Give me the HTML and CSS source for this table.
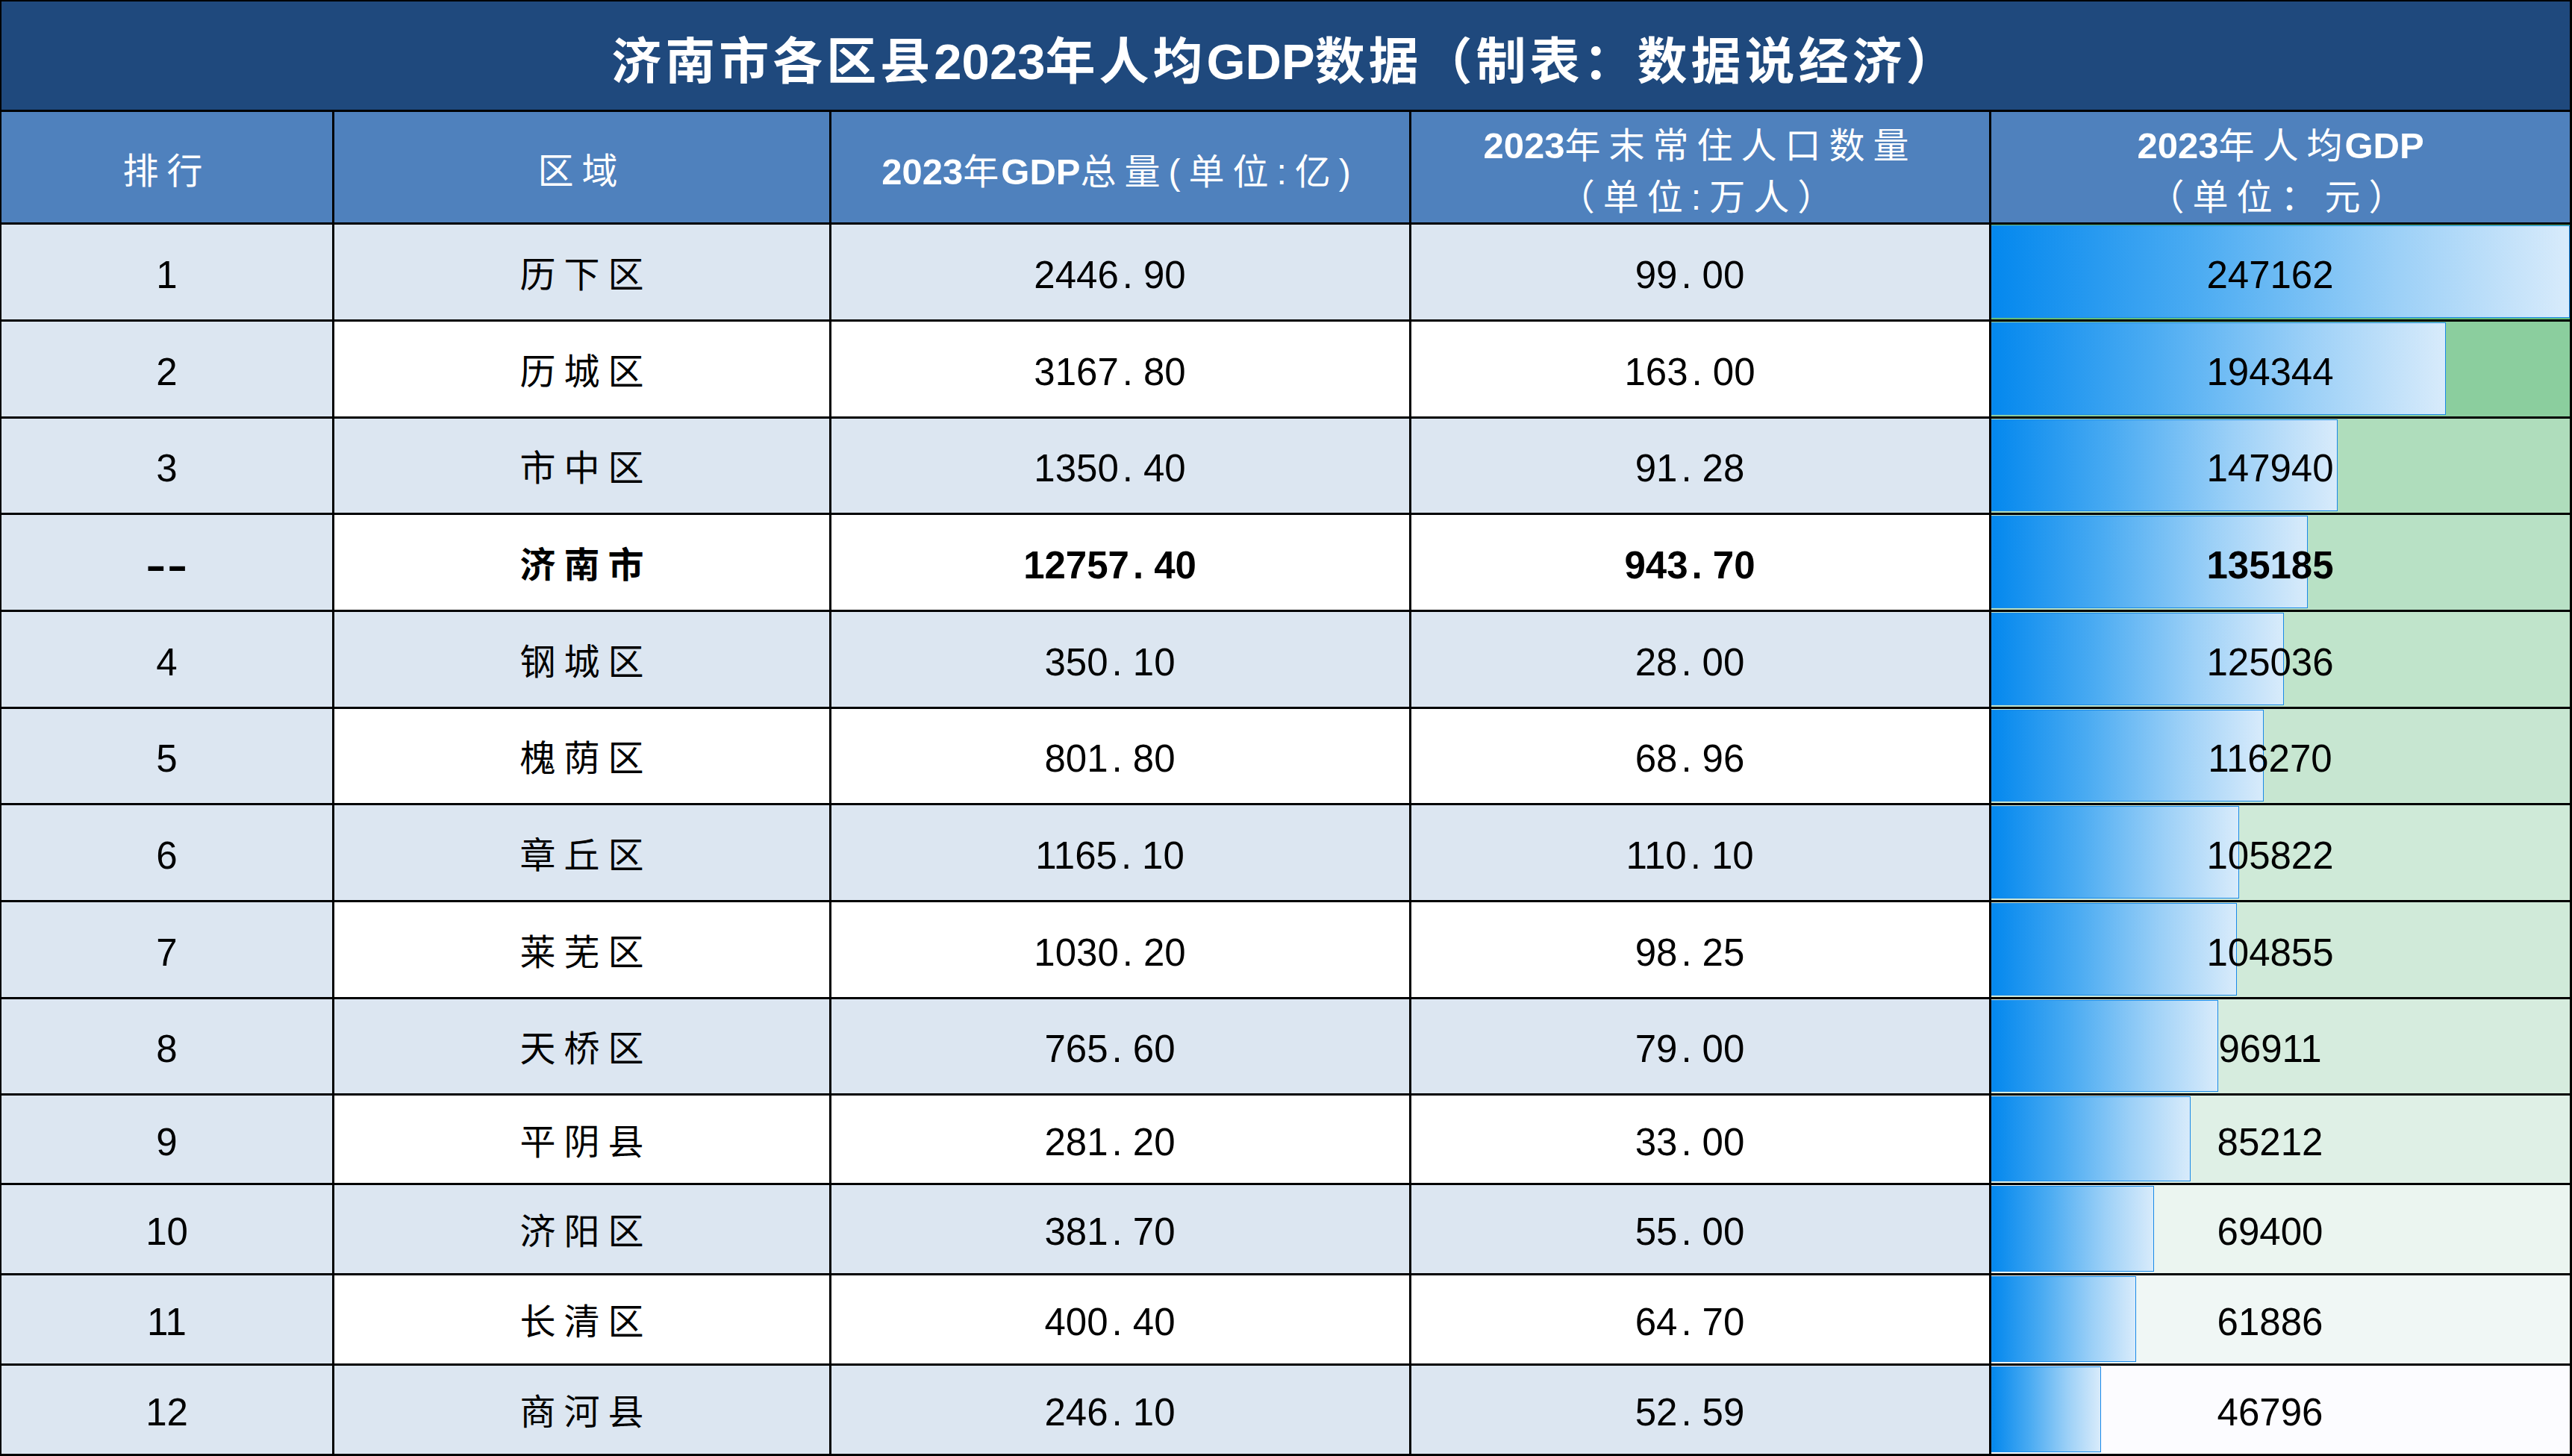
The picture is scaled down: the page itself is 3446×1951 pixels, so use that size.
FILE: index.html
```html
<!DOCTYPE html>
<html lang="zh-CN">
<head>
<meta charset="utf-8">
<title>济南市各区县2023年人均GDP数据</title>
<link rel="stylesheet" href="styles.css">
</head>
<body>
<div class="sheet">
  <div class="title"><span class="cj">济南市各区县</span>2023<span class="cj">年人均</span>GDP<span class="cj">数据（制表：数据说经济）</span></div>

  <div class="hd"><span class="cj">排行</span></div>
  <div class="hd"><span class="cj">区域</span></div>
  <div class="hd"><div class="ln">2023<span class="cj tight">年</span>GDP<span class="cj">总量(单位:亿)</span></div></div>
  <div class="hd"><div class="ln">2023<span class="cj">年末常住人口数量</span></div><div class="ln"><span class="cj">（单位:万人）</span></div></div>
  <div class="hd"><div class="ln">2023<span class="cj">年人</span><span class="cj tight">均</span>GDP</div><div class="ln"><span class="cj">（单位：元）</span></div></div>

  <div class="row alt">
    <div class="c rk">1</div><div class="c nm">历下区</div><div class="c num">2446<span class="pt">.</span>90</div><div class="c num">99<span class="pt">.</span>00</div>
    <div class="c pc" style="background-color:rgb(99,190,123)"><div class="bar" style="width:100%"></div><span class="v">247162</span></div>
  </div>
  <div class="row">
    <div class="c rk">2</div><div class="c nm">历城区</div><div class="c num">3167<span class="pt">.</span>80</div><div class="c num">163<span class="pt">.</span>00</div>
    <div class="c pc" style="background-color:rgb(139,206,158)"><div class="bar" style="width:78.63%"></div><span class="v">194344</span></div>
  </div>
  <div class="row alt">
    <div class="c rk">3</div><div class="c nm">市中区</div><div class="c num">1350<span class="pt">.</span>40</div><div class="c num">91<span class="pt">.</span>28</div>
    <div class="c pc" style="background-color:rgb(175,221,188)"><div class="bar" style="width:59.86%"></div><span class="v">147940</span></div>
  </div>
  <div class="row tot">
    <div class="c rk"><span class="dash">--</span></div><div class="c nm">济南市</div><div class="c num">12757<span class="pt">.</span>40</div><div class="c num">943<span class="pt">.</span>70</div>
    <div class="c pc" style="background-color:rgb(184,225,197)"><div class="bar" style="width:54.69%"></div><span class="v">135185</span></div>
  </div>
  <div class="row alt">
    <div class="c rk">4</div><div class="c nm">钢城区</div><div class="c num">350<span class="pt">.</span>10</div><div class="c num">28<span class="pt">.</span>00</div>
    <div class="c pc" style="background-color:rgb(192,228,203)"><div class="bar" style="width:50.59%"></div><span class="v">125036</span></div>
  </div>
  <div class="row">
    <div class="c rk">5</div><div class="c nm">槐荫区</div><div class="c num">801<span class="pt">.</span>80</div><div class="c num">68<span class="pt">.</span>96</div>
    <div class="c pc" style="background-color:rgb(199,230,209)"><div class="bar" style="width:47.04%"></div><span class="v">116270</span></div>
  </div>
  <div class="row alt">
    <div class="c rk">6</div><div class="c nm">章丘区</div><div class="c num">1165<span class="pt">.</span>10</div><div class="c num">110<span class="pt">.</span>10</div>
    <div class="c pc" style="background-color:rgb(207,234,216)"><div class="bar" style="width:42.81%"></div><span class="v">105822</span></div>
  </div>
  <div class="row">
    <div class="c rk">7</div><div class="c nm">莱芜区</div><div class="c num">1030<span class="pt">.</span>20</div><div class="c num">98<span class="pt">.</span>25</div>
    <div class="c pc" style="background-color:rgb(208,234,217)"><div class="bar" style="width:42.42%"></div><span class="v">104855</span></div>
  </div>
  <div class="row alt">
    <div class="c rk">8</div><div class="c nm">天桥区</div><div class="c num">765<span class="pt">.</span>60</div><div class="c num">79<span class="pt">.</span>00</div>
    <div class="c pc" style="background-color:rgb(214,236,222)"><div class="bar" style="width:39.21%"></div><span class="v">96911</span></div>
  </div>
  <div class="row">
    <div class="c rk">9</div><div class="c nm">平阴县</div><div class="c num">281<span class="pt">.</span>20</div><div class="c num">33<span class="pt">.</span>00</div>
    <div class="c pc" style="background-color:rgb(223,240,230)"><div class="bar" style="width:34.48%"></div><span class="v">85212</span></div>
  </div>
  <div class="row alt">
    <div class="c rk">10</div><div class="c nm">济阳区</div><div class="c num">381<span class="pt">.</span>70</div><div class="c num">55<span class="pt">.</span>00</div>
    <div class="c pc" style="background-color:rgb(235,245,240)"><div class="bar" style="width:28.08%"></div><span class="v">69400</span></div>
  </div>
  <div class="row">
    <div class="c rk">11</div><div class="c nm">长清区</div><div class="c num">400<span class="pt">.</span>40</div><div class="c num">64<span class="pt">.</span>70</div>
    <div class="c pc" style="background-color:rgb(240,247,245)"><div class="bar" style="width:25.04%"></div><span class="v">61886</span></div>
  </div>
  <div class="row alt">
    <div class="c rk">12</div><div class="c nm">商河县</div><div class="c num">246<span class="pt">.</span>10</div><div class="c num">52<span class="pt">.</span>59</div>
    <div class="c pc" style="background-color:rgb(252,252,255)"><div class="bar" style="width:18.93%"></div><span class="v">46796</span></div>
  </div>
</div>
</body>
</html>
```

FILE: styles.css
```css
html, body {
  margin: 0;
  padding: 0;
  background: #ffffff;
}

body {
  font-family: "Liberation Sans", "Noto Sans CJK SC", sans-serif;
  color: #000;
}

.sheet {
  width: 3446px;
  height: 1951px;
  box-sizing: border-box;
  border-left: 2px solid #000;
  border-top: 2px solid #000;
  display: grid;
  grid-template-columns: 446px 666px 777px 777px 778px;
  grid-template-rows: 148px 151px 130px 130px 129px 130px 130px 129px 130px 130px 129px 120px 121px 121px 121px;
}

.title,
.hd,
.c {
  box-sizing: border-box;
  border-right: 3px solid #000;
  border-bottom: 3px solid #000;
  display: flex;
  align-items: center;
  justify-content: center;
  white-space: nowrap;
}

.title {
  grid-column: 1 / -1;
  background: #1f497d;
  color: #fff;
  font-weight: 700;
  font-size: 67px;
  line-height: 1;
  padding-top: 16px;
}

.title .cj {
  letter-spacing: 5px;
}

.hd {
  background: #4f81bd;
  color: #fff;
  font-weight: 700;
  font-size: 49px;
  flex-direction: column;
  line-height: 68px;
  padding-top: 12px;
}

.hd .cj {
  font-weight: 400;
  font-size: 48px;
  letter-spacing: 11px;
}

.hd .cj.tight {
  letter-spacing: 0;
  margin-right: 3px;
}

.hd .ln {
  display: block;
}

.row {
  display: contents;
}

.c {
  background: #ffffff;
  font-size: 51px;
  line-height: 1.2;
  padding-top: 8px;
}

.row.alt > .c,
.c.rk {
  background-color: #dce6f1;
}

.row.tot > .c {
  font-weight: 700;
}

.dash {
  display: inline-block;
  transform: scaleX(1.6);
  letter-spacing: 1px;
}

.nm {
  font-size: 48px;
  letter-spacing: 11px;
  padding-left: 11px;
}

.num {
  padding-right: 28px;
}

.pt {
  margin: 0 14px 0 5px;
}

.pc {
  position: relative;
  padding-right: 28px;
}

.bar {
  position: absolute;
  left: 0;
  top: 1px;
  bottom: 2px;
  box-sizing: border-box;
  border: 1px solid #1a8ae8;
  background: linear-gradient(90deg, #0488ee 0%, #4aabf2 35%, #9cd0f7 70%, #d8ebfb 100%);
}

.v {
  position: relative;
}
```
